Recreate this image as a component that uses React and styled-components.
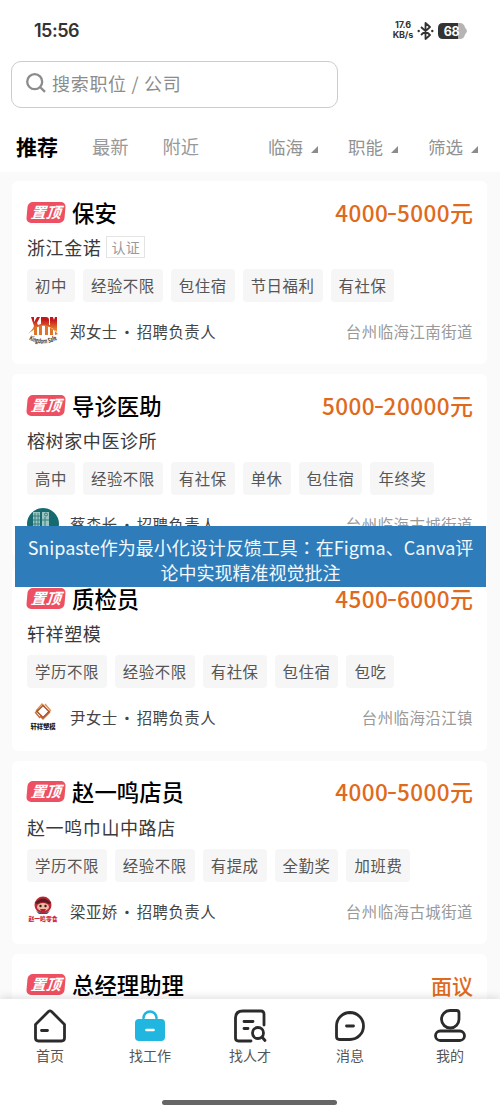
import React from "react";
import styled, { createGlobalStyle } from "styled-components";

const GlobalStyle = createGlobalStyle`
  * {
    box-sizing: border-box;
  }

  body {
    margin: 0;
    background: #fff;
    font-family: "Noto Sans CJK SC", "Noto Sans", sans-serif;
  }
`;

const Screen = styled.div`
  position: relative;
  display: flex;
  flex-direction: column;
  width: 500px;
  height: 1112px;
  overflow: hidden;
  background: #fff;
`;

const StatusBar = styled.div`
  display: flex;
  align-items: center;
  justify-content: space-between;
  height: 61px;
  padding: 0 33px 0 34px;
  flex: none;
`;

const Clock = styled.span`
  font: 600 18px/24px Inter, sans-serif;
  letter-spacing: -0.5px;
  color: #333;
`;

const StatusIcons = styled.div`
  display: flex;
  align-items: center;
  gap: 4px;
`;

const NetSpeed = styled.div`
  padding-bottom: 2px;
  font: 700 9px/10px Inter, sans-serif;
  letter-spacing: -0.2px;
  text-align: center;
  color: #333;
`;

const Search = styled.div`
  display: flex;
  align-items: center;
  gap: 6px;
  width: 327px;
  height: 47px;
  margin-left: 11px;
  padding: 0 14px 3px;
  border: 1.5px solid #ccc;
  border-radius: 10px;
  font-size: 18px;
  letter-spacing: 0.7px;
  color: #8c8c8c;
  flex: none;
`;

const Tabs = styled.nav`
  display: flex;
  align-items: center;
  height: 64px;
  padding: 12px 22px 0 16px;
  flex: none;
`;

const Tab = styled.span`
  margin-right: 34px;
  font-size: ${({ $active }) => ($active ? "21px" : "18.3px")};
  font-weight: ${({ $active }) => ($active ? 700 : 400)};
  color: ${({ $active }) => ($active ? "#000" : "#999")};
`;

const Filters = styled.div`
  display: flex;
  gap: 30px;
  margin-left: auto;
`;

const Filter = styled.span`
  display: flex;
  align-items: center;
  gap: 8px;
  font-size: 17.5px;
  line-height: 25px;
  color: #929292;

  &::after {
    content: "";
    width: 7px;
    height: 7px;
    margin-top: 7px;
    background: #8c8c8c;
    clip-path: polygon(100% 0, 100% 100%, 0 100%);
  }
`;

const List = styled.main`
  display: flex;
  flex-direction: column;
  gap: 10px;
  flex: 1;
  min-height: 0;
  padding: 9px 13px 0 12px;
  overflow: hidden;
  background: #fafafa;
`;

const Card = styled.article`
  height: 183.2px;
  padding: 15.500px 14px 0 15px;
  border-radius: 6px;
  background: #fff;
  flex: none;
`;

const TitleRow = styled.div`
  display: flex;
  align-items: center;
  height: 31px;
`;

const PinBadge = styled.span`
  width: 38px;
  height: 21px;
  margin-right: 7px;
  border-radius: 5px;
  background: #ed5062;
  color: #fff;
  font-size: 15px;
  font-weight: 700;
  font-style: italic;
  line-height: 20px;
  text-align: center;
  transform: skewX(-5deg);
`;

const JobTitle = styled.h2`
  margin: 0;
  font-size: 22.4px;
  font-weight: 500;
  line-height: 31px;
  color: #000;
`;

const Salary = styled.span`
  margin-left: auto;
  font-size: 22.5px;
  font-weight: 500;
  letter-spacing: 0.45px;
  line-height: 31px;
  color: #e06a1c;
`;

const Dash = styled.span`
  display: inline-block;
  line-height: 1;
  transform: translateY(-2px) scaleX(1.3);
`;

const Unit = styled.span`
  font-size: ${({ $wide }) => ($wide ? "21px" : "23px")};
  letter-spacing: 0;
`;

const CompanyRow = styled.div`
  display: flex;
  align-items: center;
  gap: 5px;
  height: 27px;
  margin-top: 6px;
  font-size: 18px;
  letter-spacing: 0.6px;
  color: #3a3a3a;
`;

const Verified = styled.span`
  padding: 0 4px;
  border: 1px solid #e4e4e4;
  font-size: 14px;
  letter-spacing: 0.3px;
  line-height: 20px;
  color: #999;
`;

const Tags = styled.div`
  display: flex;
  gap: 8px;
  margin-top: 8.500px;
`;

const Tag = styled.span`
  padding: 0 8px;
  border-radius: 4px;
  background: #f6f6f6;
  font-size: 15.4px;
  letter-spacing: 0.57px;
  line-height: 33px;
  color: #555;
`;

const Footer = styled.div`
  display: flex;
  align-items: center;
  height: 32px;
  margin-top: 13px;
  font-size: 15.4px;
  letter-spacing: 0.5px;
`;

const Avatar = styled.svg`
  width: 32px;
  height: 32px;
  margin-right: 11px;
  overflow: visible;
  letter-spacing: 0;
`;

const Contact = styled.span`
  color: #444;
`;

const Dot = styled.span`
  display: inline-block;
  width: 19px;
  text-align: center;
`;

const Place = styled.span`
  margin-left: auto;
  color: #999;
`;

const Banner = styled.div`
  position: absolute;
  top: 526px;
  left: 15px;
  width: 471px;
  height: 61px;
  padding-top: 9px;
  background: #2e7dba;
  color: #f4f8fc;
  font-family: "Noto Sans CJK JP", "Noto Sans CJK SC", sans-serif;
  font-size: 18px;
  line-height: 25px;
  text-align: center;
  white-space: nowrap;
`;

const TabBar = styled.footer`
  display: flex;
  align-items: flex-start;
  height: 113px;
  flex: none;
  background: #fff;
  box-shadow: 0 -2px 8px rgba(0, 0, 0, 0.12);
  z-index: 1;
`;

const NavItem = styled.div`
  display: flex;
  flex-direction: column;
  align-items: center;
  width: 100px;
  padding-top: 9px;
  font-size: 14px;
  line-height: 22px;
  color: #555;

  svg {
    width: 36px;
    height: 36px;
  }
`;

const HomeIndicator = styled.div`
  position: absolute;
  z-index: 2;
  bottom: 7.500px;
  left: 162px;
  width: 175px;
  height: 5px;
  border-radius: 3px;
  background: #666;
`;

const BluetoothIcon = () => (
  <svg width="17" height="18" viewBox="0 0 17 18" fill="none" stroke="#333" strokeWidth="1.8">
    <path d="M4 5l9 8-4.5 4V1L13 5l-9 8" strokeLinejoin="round" />
    <circle cx="1.7" cy="9" r="1.2" fill="#333" stroke="none" />
    <circle cx="15.3" cy="9" r="1.2" fill="#333" stroke="none" />
  </svg>
);

const BatteryIcon = () => (
  <svg width="29" height="16" viewBox="0 0 29 16">
    <path d="M20 0h2q4 0 5 4.5l1.5 2q.8 1.5 0 3L27 11.5Q26 16 22 16h-2z" fill="#b5b5b5" />
    <path d="M5 0h15v16H5q-5 0-5-5V5q0-5 5-5z" fill="#333" />
    <text x="13.5" y="12.7" textAnchor="middle" fontFamily="Inter" fontSize="12.5" fontWeight="700" letterSpacing="-0.5" fill="#fff">
      68
    </text>
  </svg>
);

const SearchIcon = () => (
  <svg width="20" height="20" viewBox="0 0 20 20" fill="none" stroke="#8c8c8c" strokeWidth="2.3">
    <circle cx="8.7" cy="8.7" r="7.5" />
    <path d="M14 14l5 4.8" />
  </svg>
);

const logos = {
  kdm: (
    <>
      <defs>
        <linearGradient id="kdm" x1="0" y1="0" x2="0" y2="1">
          <stop offset="0.2" stopColor="#c4171c" />
          <stop offset="1" stopColor="#eda032" />
        </linearGradient>
        <path id="kdmArc" d="M1 24Q16 33 31 24" />
      </defs>
      <path
        d="M4 2h3v5l3-5h3l-3 6 1 2 3-1V2h5q3 0 3 3v5h1V2h3l1 3 1-3h2v15Q16 4 4 17l3-6z"
        fill="url(#kdm)"
      />
      <path d="M1 19Q15 1 31 19l-3 1V15l-2-2v7h-3v-9h-2v9h-3V10h-3v10h-3v-9h-2v9H7v-6z" fill="#df7428" />
      <text fontSize="6.5" fontWeight="700" fill="#333">
        <textPath href="#kdmArc" startOffset="50%" textAnchor="middle" textLength="30" lengthAdjust="spacingAndGlyphs">
          Kingdom Safe
        </textPath>
      </text>
    </>
  ),
  clinic: (
    <>
      <circle cx="16" cy="16" r="16" fill="#176b70" />
      <path d="M6 4h7v24H6zM15 4h7v24h-7z" fill="#9bc5c1" />
      <path d="M8 5v20M11 5v20M6 8h7M6 12h7M6 16h7M18 9v17M15 12h7" stroke="#397e80" />
      <circle cx="19" cy="6.5" r="1.5" fill="none" stroke="#397e80" />
    </>
  ),
  xuanxiang: (
    <>
      <g fill="none" strokeWidth="1.4">
        <path d="M9 10l6-7 3 3M18 3l5.500 6.500-3 3" stroke="#dc9656" />
        <path d="M23 11l-7 7-3-3M13 17l-4.500-5.500 3-3" stroke="#c9703c" />
        <path d="M16 4.500l6 6-6 6-6-6z" stroke="#a7502e" />
      </g>
      <text x="16" y="28" textAnchor="middle" fontSize="6.3" fontWeight="900" fill="#222">
        轩祥塑模
      </text>
    </>
  ),
  zhao: (
    <>
      <circle cx="16" cy="10" r="8.5" fill="#bf2635" />
      <path d="M8 8q8-9 16 0l-2 1q-6-4-12 0z" fill="#542026" />
      <ellipse cx="16" cy="12" rx="6" ry="4" fill="#f0b9a3" />
      <circle cx="13.5" cy="11" r="1.2" fill="#3b1b20" />
      <circle cx="18.5" cy="11" r="1.2" fill="#3b1b20" />
      <path d="M13 14h6l-1 2h-4z" fill="#b71f30" />
      <path d="M9 16q7 4 14 0l-3 3h-8z" fill="#35517c" />
      <text x="16" y="25.5" textAnchor="middle" fontSize="5.8" fontWeight="900" fill="#d0283c">
        赵一鸣零食
      </text>
    </>
  ),
};

const jobs = [
  {
    title: "保安",
    salary: ["4000", "5000"],
    company: "浙江金诺",
    verified: true,
    tags: ["初中", "经验不限", "包住宿", "节日福利", "有社保"],
    contact: "郑女士",
    place: "台州临海江南街道",
    logo: "kdm",
  },
  {
    title: "导诊医助",
    salary: ["5000", "20000"],
    company: "榕树家中医诊所",
    tags: ["高中", "经验不限", "有社保", "单休", "包住宿", "年终奖"],
    contact: "蔡森长",
    place: "台州临海古城街道",
    logo: "clinic",
  },
  {
    title: "质检员",
    salary: ["4500", "6000"],
    company: "轩祥塑模",
    tags: ["学历不限", "经验不限", "有社保", "包住宿", "包吃"],
    contact: "尹女士",
    place: "台州临海沿江镇",
    logo: "xuanxiang",
  },
  {
    title: "赵一鸣店员",
    salary: ["4000", "5000"],
    company: "赵一鸣巾山中路店",
    tags: ["学历不限", "经验不限", "有提成", "全勤奖", "加班费"],
    contact: "梁亚娇",
    place: "台州临海古城街道",
    logo: "zhao",
  },
  { title: "总经理助理" },
];

const JobCard = ({ job }) => (
  <Card>
    <TitleRow>
      <PinBadge>置顶</PinBadge>
      <JobTitle>{job.title}</JobTitle>
      <Salary>
        {job.salary && (
          <>
            {job.salary[0]}
            <Dash>-</Dash>
            {job.salary[1]}
          </>
        )}
        <Unit $wide={!job.salary}>{job.salary ? "元" : "面议"}</Unit>
      </Salary>
    </TitleRow>
    {job.company && (
      <>
        <CompanyRow>
          {job.company}
          {job.verified && <Verified>认证</Verified>}
        </CompanyRow>
        <Tags>
          {job.tags.map((tag) => (
            <Tag key={tag}>{tag}</Tag>
          ))}
        </Tags>
        <Footer>
          <Avatar viewBox="0 0 32 32">{logos[job.logo]}</Avatar>
          <Contact>
            {job.contact}
            <Dot>·</Dot>
            招聘负责人
          </Contact>
          <Place>{job.place}</Place>
        </Footer>
      </>
    )}
  </Card>
);

const line = {
  fill: "none",
  stroke: "#2b2b2b",
  strokeWidth: 2.8,
  strokeLinecap: "round",
  strokeLinejoin: "round",
};

const navItems = [
  {
    label: "首页",
    icon: <path {...line} d="M3.5 16.5L16.5 3.5q1.5-1.2 3 0l13 13V30q0 3-3 3h-23q-3 0-3-3zM9.5 22.5h6" />,
  },
  {
    label: "找工作",
    icon: (
      <>
        <path d="M11.5 10a6.5 6.5 0 0 1 13 0" fill="none" stroke="#20b6df" strokeWidth="2.6" strokeLinecap="round" />
        <rect x="3" y="11" width="30" height="22" rx="4" fill="#20b6df" />
        <path d="M14.5 22h7" stroke="#fff" strokeWidth="2.6" strokeLinecap="round" />
      </>
    ),
  },
  {
    label: "找人才",
    icon: (
      <>
        <path {...line} d="M32 17V6q0-3-3-3H11Q3.5 3 3.5 10v20q0 3 3 3H19" />
        <path {...line} d="M12 13.5h9M12 20.5h4" />
        <circle {...line} cx="26" cy="25" r="5.5" />
        <path {...line} d="M30 29l3 3.5" />
      </>
    ),
  },
  {
    label: "消息",
    icon: <path {...line} d="M18 4.5a13.5 13.5 0 0 1 0 27H7.5q-3 0-3-3V18A13.5 13.5 0 0 1 18 4.5zM14.5 18h7" />,
  },
  {
    label: "我的",
    icon: (
      <>
        <path {...line} d="M18 2.5h6.5q2.5 0 2.5 2.5v6a8.75 8.75 0 1 1-9-8.5z" />
        <rect {...line} x="3.5" y="23" width="29" height="9.5" rx="4.75" />
      </>
    ),
  },
];

const App = () => {
  return (
    <Screen>
      <GlobalStyle />
      <StatusBar>
        <Clock>15:56</Clock>
        <StatusIcons>
          <NetSpeed>
            17.6
            <br />
            KB/s
          </NetSpeed>
          <BluetoothIcon />
          <BatteryIcon />
        </StatusIcons>
      </StatusBar>
      <Search>
        <SearchIcon />
        搜索职位 / 公司
      </Search>
      <Tabs>
        <Tab $active>推荐</Tab>
        <Tab>最新</Tab>
        <Tab>附近</Tab>
        <Filters>
          <Filter>临海</Filter>
          <Filter>职能</Filter>
          <Filter>筛选</Filter>
        </Filters>
      </Tabs>
      <List>
        {jobs.map((job) => (
          <JobCard key={job.title} job={job} />
        ))}
      </List>
      <TabBar>
        {navItems.map(({ label, icon }) => (
          <NavItem key={label}>
            <svg viewBox="0 0 36 36">{icon}</svg>
            {label}
          </NavItem>
        ))}
      </TabBar>
      <Banner>
        Snipaste作为最小化设计反馈工具：在Figma、Canva评
        <br />
        论中实现精准视觉批注
      </Banner>
      <HomeIndicator />
    </Screen>
  );
};

export default App;
